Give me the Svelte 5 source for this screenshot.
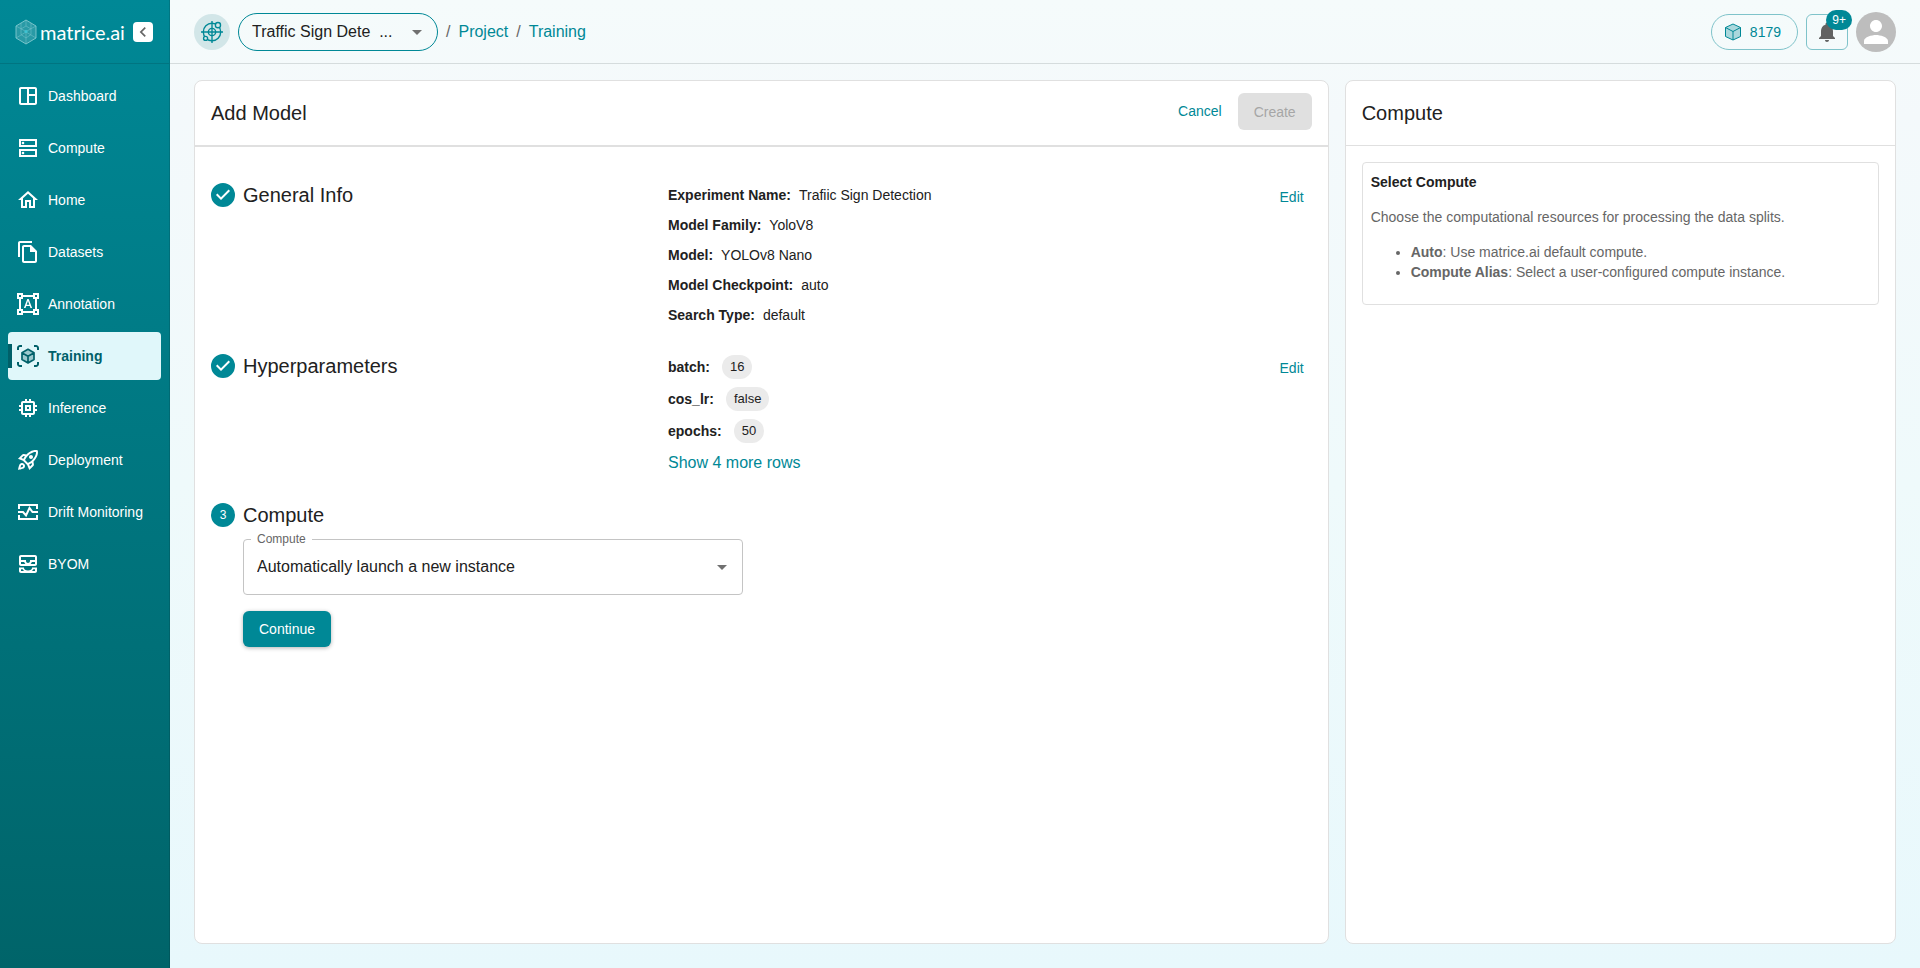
<script lang="ts">
    const navItems = [
        { label: 'Dashboard', icon: 'dashboard' },
        { label: 'Compute', icon: 'compute' },
        { label: 'Home', icon: 'home' },
        { label: 'Datasets', icon: 'datasets' },
        { label: 'Annotation', icon: 'annotation' },
        { label: 'Training', icon: 'training' },
        { label: 'Inference', icon: 'inference' },
        { label: 'Deployment', icon: 'deployment' },
        { label: 'Drift Monitoring', icon: 'drift' },
        { label: 'BYOM', icon: 'byom' },
    ];

    const generalInfo = [
        { label: 'Experiment Name', value: 'Trafiic Sign Detection' },
        { label: 'Model Family', value: 'YoloV8' },
        { label: 'Model', value: 'YOLOv8 Nano' },
        { label: 'Model Checkpoint', value: 'auto' },
        { label: 'Search Type', value: 'default' },
    ];

    const hyperparameters = [
        { label: 'batch', value: '16' },
        { label: 'cos_lr', value: 'false' },
        { label: 'epochs', value: '50' },
    ];

    let active = $state('Training');
    let project = $state('traffic');
    let compute = $state('auto');
</script>

{#snippet navIcon(name: string)}
    <svg class="nav-icon" viewBox="0 0 24 24" fill="currentColor" aria-hidden="true">
        {#if name === 'dashboard'}
            <path d="M19 3H5c-1.100 0-2 .9-2 2v14c0 1.100.9 2 2 2h14c1.100 0 2-.9 2-2V5c0-1.100-.9-2-2-2zM5 19V5h6v14H5zm14 0h-6v-7h6v7zm0-9h-6V5h6v5z" />
        {:else if name === 'compute'}
            <path d="M19 5v4H5V5h14m2-2H3v8h18V3zM19 15v4H5v-4h14m2-2H3v8h18v-8z" />
            <circle cx="7" cy="7" r="1.300" />
            <circle cx="7" cy="17" r="1.300" />
        {:else if name === 'home'}
            <path d="m12 5.690 5 4.500V18h-2v-6H9v6H7v-7.810l5-4.500M12 3 2 12h3v8h6v-6h2v6h6v-8h3L12 3z" />
        {:else if name === 'datasets'}
            <path d="M16 1H4c-1.100 0-2 .9-2 2v14h2V3h12V1zm-1 4H8c-1.100 0-2 .9-2 2v14c0 1.100.9 2 2 2h11c1.100 0 2-.9 2-2V11l-6-6zM8 21V7h6v5h5v9H8z" />
        {:else if name === 'annotation'}
            <path d="M23 7V1h-6v2H7V1H1v6h2v10H1v6h6v-2h10v2h6v-6h-2V7h2zM3 3h2v2H3V3zm2 18H3v-2h2v2zm12-2H7v-2H5V7h2V5h10v2h2v10h-2v2zm4 2h-2v-2h2v2zM19 5V3h2v2h-2zm-5.270 9h-3.490l-.730 2H7.890l3.400-9h1.400l3.410 9h-1.630l-.740-2zm-3.040-1.260h2.610L12 8.910l-1.310 3.830z" />
        {:else if name === 'training'}
            <path d="M3 4c0-.550.450-1 1-1h2V1H4C2.340 1 1 2.340 1 4v2h2V4zM3 20v-2H1v2c0 1.660 1.340 3 3 3h2v-2H4c-.550 0-1-.450-1-1zM20 1h-2v2h2c.550 0 1 .450 1 1v2h2V4c0-1.660-1.340-3-3-3zM21 20c0 .550-.450 1-1 1h-2v2h2c1.660 0 3-1.340 3-3v-2h-2v2z" />
            <path d="m12 5.500 6 3.300v6.600L12 19l-6-3.600V8.800z" opacity="0.3" />
            <path d="M12 5.300 18 8.700v6.800l-6 3.400-6-3.400V8.700zM6.200 8.900 12 12.200l5.800-3.300M12 12.200v6.600" fill="none" stroke="currentColor" stroke-width="1.700" stroke-linejoin="round" />
        {:else if name === 'inference'}
            <path d="M15 9H9v6h6V9zm-2 4h-2v-2h2v2zm8-2V9h-2V7c0-1.100-.9-2-2-2h-2V3h-2v2h-2V3H9v2H7c-1.100 0-2 .9-2 2v2H3v2h2v2H3v2h2v2c0 1.100.9 2 2 2h2v2h2v-2h2v2h2v-2h2c1.100 0 2-.9 2-2v-2h2v-2h-2v-2h2zm-4 6H7V7h10v10z" />
        {:else if name === 'deployment'}
            <path d="M6 15c-.830 0-1.580.340-2.120.880C2.700 17.060 2 22 2 22s4.940-.7 6.120-1.880C8.660 19.580 9 18.830 9 18c0-1.660-1.340-3-3-3zm.710 3.710c-.280.280-2.170.760-2.170.760s.470-1.880.760-2.170c.170-.190.420-.3.700-.3.550 0 1 .450 1 1 0 .280-.110.530-.290.710zm10.710-5.060c6.360-6.360 4.240-11.310 4.240-11.310S16.710.220 10.350 6.580l-2.490-.5c-.650-.130-1.330.080-1.810.550L2 10.690l5 2.140L11.170 17l2.140 5 4.050-4.050c.470-.470.680-1.150.550-1.810l-.490-2.490zM7.410 10.830l-1.910-.820 1.970-1.970 1.440.290c-.570.830-1.080 1.700-1.500 2.500zm6.580 7.670-.820-1.910c.8-.420 1.670-.930 2.490-1.500l.290 1.440-1.960 1.970zM16 12.240c-1.320 1.320-3.380 2.400-4.040 2.730l-2.930-2.930c.320-.650 1.400-2.710 2.730-4.040 4.680-4.680 8.230-3.990 8.230-3.990s.690 3.550-3.990 8.230zM15 11c1.100 0 2-.9 2-2s-.9-2-2-2-2 .9-2 2 .9 2 2 2z" />
        {:else if name === 'drift'}
            <path d="M3 9V5h18v4M3 15v4h18v-4M2 12h5l3 3.500 3.500-7.500 3 4H22" fill="none" stroke="currentColor" stroke-width="2" />
        {:else}
            <path d="M19 3H5c-1.100 0-2 .9-2 2v7c0 1.100.9 2 2 2h14c1.100 0 2-.9 2-2V5c0-1.100-.9-2-2-2zM5 12v-2h3.130c.210.780.670 1.470 1.270 2H5zm14 0h-4.400c.6-.530 1.060-1.220 1.270-2H19v2zm0-4h-5v1c0 1.070-.930 2-2 2s-2-.930-2-2V8H5V5h14v3zM16 15.500V16c0 1.200-1.600 2.500-4 2.500S8 17.200 8 16v-.5H3V19c0 1.100.9 2 2 2h14c1.100 0 2-.9 2-2v-3.500h-5zM5 19v-1.700h1.700c.3.700.8 1.300 1.400 1.700H5zm14 0h-3.100c.6-.4 1.100-1 1.400-1.700H19V19z" />
        {/if}
    </svg>
{/snippet}

{#snippet stepCheck()}
    <svg class="step-icon" viewBox="0 0 24 24" aria-hidden="true">
        <path d="M12 0a12 12 0 1 0 0 24 12 12 0 0 0 0-24zm-2 17l-5-5 1.400-1.400 3.600 3.600 7.600-7.600L19 8l-9 9z" fill="#008896" />
    </svg>
{/snippet}

<div class="app">
    <aside class="sidebar">
        <div class="brand">
            <a class="logo" href="#home" aria-label="matrice.ai">
                <svg class="logo-mark" viewBox="0 0 22 26" aria-hidden="true">
                    <path d="M11 1 21 7v12l-10 6L1 19V7z" fill="#ffffff" fill-opacity="0.16" stroke="#8fd0d6" stroke-width="0.8" />
                    <path d="M1 7l10 5.500L21 7M11 12.500V25M11 1v6M1 19l10-6 10 6M6 4v11.500l5 3.500 5-3.500V4M6 10l5-3 5 3" fill="none" stroke="#7cc7cf" stroke-width="0.5" />
                    <circle cx="11" cy="12.500" r="1.600" fill="#3fc3d2" />
                </svg>
                <span class="logo-text">matrice.ai</span>
            </a>
            <button class="collapse" aria-label="Collapse sidebar">
                <svg viewBox="0 0 24 24" aria-hidden="true">
                    <path d="M15.410 7.410 14 6l-6 6 6 6 1.410-1.410L10.830 12z" fill="#666" />
                </svg>
            </button>
        </div>
        <nav>
            {#each navItems as item}
                <a
                    class="nav-item"
                    class:active={active === item.label}
                    href="#{item.icon}"
                    onclick={() => (active = item.label)}
                >
                    {@render navIcon(item.icon)}
                    <span>{item.label}</span>
                </a>
            {/each}
        </nav>
    </aside>

    <div class="page">
        <header class="topbar">
            <div class="crumbs">
                <span class="project-icon">
                    <svg viewBox="0 0 24 24" fill="none" stroke="#008896" stroke-width="1.500" aria-hidden="true">
                        <circle cx="12" cy="12" r="9.500" />
                        <circle cx="12" cy="12" r="4" />
                        <path d="M12 0v24M0 12h24" />
                        <circle cx="18.500" cy="4.500" r="2.800" fill="#d2e6e8" />
                        <circle cx="5" cy="19" r="2.200" fill="#d2e6e8" />
                    </svg>
                </span>
                <div class="select-wrap project">
                    <select bind:value={project} aria-label="Project">
                        <option value="traffic">Traffic Sign Dete &nbsp;...</option>
                    </select>
                    <svg class="arrow" viewBox="0 0 24 24" aria-hidden="true"><path d="m7 10 5 5 5-5z" /></svg>
                </div>
                <span class="slash">/</span>
                <a href="#project">Project</a>
                <span class="slash">/</span>
                <a href="#training">Training</a>
            </div>
            <div class="account">
                <button class="credits">
                    <svg viewBox="0 0 18 18" aria-hidden="true">
                        <path d="M9 1l7.500 3.500v9L9 17l-7.500-3.500v-9z" fill="#008896" fill-opacity="0.3" stroke="#008896" stroke-linejoin="round" />
                        <path d="M1.500 4.500 9 8.500l7.500-4M9 8.500V17" fill="none" stroke="#008896" />
                    </svg>
                    8179
                </button>
                <button class="bell" aria-label="Notifications">
                    <svg viewBox="0 0 24 24" aria-hidden="true">
                        <path d="M12 22c1.100 0 2-.9 2-2h-4c0 1.100.890 2 2 2zm6-6v-5c0-3.070-1.640-5.640-4.500-6.320V4c0-.830-.670-1.500-1.500-1.500s-1.500.670-1.500 1.500v.680C7.630 5.360 6 7.920 6 11v5l-2 2v1h16v-1l-2-2z" fill="#626262" />
                    </svg>
                    <span class="badge">9+</span>
                </button>
                <button class="avatar" aria-label="Account">
                    <svg viewBox="0 0 24 24" aria-hidden="true">
                        <path d="M12 12c2.210 0 4-1.790 4-4s-1.790-4-4-4-4 1.790-4 4 1.790 4 4 4zm0 2c-2.670 0-8 1.340-8 4v2h16v-2c0-2.660-5.330-4-8-4z" fill="#fff" />
                    </svg>
                </button>
            </div>
        </header>

        <main class="content">
            <section class="panel">
                <div class="panel-head form-head">
                    <h1>Add Model</h1>
                    <div class="actions">
                        <button class="text-btn">Cancel</button>
                        <button class="create-btn" disabled>Create</button>
                    </div>
                </div>
                <div class="steps">
                    <div class="step">
                        <div class="step-title">
                            {@render stepCheck()}
                            <h2>General Info</h2>
                        </div>
                        <dl class="details">
                            {#each generalInfo as row}
                                <div class="detail">
                                    <dt>{row.label}:</dt>
                                    <dd>{row.value}</dd>
                                </div>
                            {/each}
                        </dl>
                        <button class="text-btn">Edit</button>
                    </div>

                    <div class="step">
                        <div class="step-title">
                            {@render stepCheck()}
                            <h2>Hyperparameters</h2>
                        </div>
                        <div class="params">
                            <dl class="details">
                                {#each hyperparameters as row}
                                    <div class="detail">
                                        <dt>{row.label}:</dt>
                                        <dd class="chip">{row.value}</dd>
                                    </div>
                                {/each}
                            </dl>
                            <button class="more">Show 4 more rows</button>
                        </div>
                        <button class="text-btn">Edit</button>
                    </div>

                    <div class="compute-step">
                        <div class="step-title">
                            <span class="step-icon step-number">3</span>
                            <h2>Compute</h2>
                        </div>
                        <div class="step-form">
                            <div class="select-wrap field">
                                <label for="compute">Compute</label>
                                <select id="compute" bind:value={compute}>
                                    <option value="auto">Automatically launch a new instance</option>
                                </select>
                                <svg class="arrow" viewBox="0 0 24 24" aria-hidden="true"><path d="m7 10 5 5 5-5z" /></svg>
                            </div>
                            <button class="continue">Continue</button>
                        </div>
                    </div>
                </div>
            </section>

            <aside class="panel help">
                <div class="panel-head">
                    <h2>Compute</h2>
                </div>
                <div class="help-card">
                    <h3>Select Compute</h3>
                    <p>Choose the computational resources for processing the data splits.</p>
                    <ul>
                        <li><strong>Auto</strong>: Use matrice.ai default compute.</li>
                        <li><strong>Compute Alias</strong>: Select a user-configured compute instance.</li>
                    </ul>
                </div>
            </aside>
        </main>
    </div>
</div>

<style>
    :global(body) {
        margin: 0;
    }

    .app {
        --teal: #008896;
        --line: #e0e0e0;
        --text: #212121;
        --muted: #666666;
        display: flex;
        min-height: 100vh;
        font-family: 'Liberation Sans', Arial, sans-serif;
        font-size: 14px;
        line-height: 20px;
        color: var(--text);
        background: linear-gradient(180deg, #f5fbfb 0%, #f4f9fb 12%, #effafb 50%, #e8f8fc 100%);
    }

    .app * {
        box-sizing: border-box;
    }

    button,
    select {
        font: inherit;
        color: inherit;
        cursor: pointer;
    }

    button {
        padding: 0;
        border: none;
        background: none;
    }

    a {
        color: var(--teal);
        text-decoration: none;
    }

    h1,
    h2,
    h3,
    p,
    dl,
    dd {
        margin: 0;
    }

    h1,
    h2 {
        font-size: 20px;
        line-height: 32px;
        font-weight: 400;
    }

    .sidebar {
        flex: none;
        width: 170px;
        border-right: 1px solid rgba(0, 0, 0, 0.12);
        color: #fff;
        background: linear-gradient(180deg, #008896 0%, #006469 100%);
    }

    .brand {
        display: flex;
        align-items: center;
        justify-content: space-between;
        height: 64px;
        padding: 1px 16px 0 15px;
        border-bottom: 1px solid rgba(0, 0, 0, 0.12);
    }

    .logo {
        display: flex;
        align-items: center;
        gap: 3px;
        color: #fff;
    }

    .logo-mark {
        width: 22px;
        height: 26px;
    }

    .logo-text {
        font-family: Lato, sans-serif;
        font-size: 20px;
        line-height: 24px;
    }

    .collapse {
        display: flex;
        width: 20px;
        height: 20px;
        border-radius: 4px;
        background: #fff;
    }

    nav {
        display: flex;
        flex-direction: column;
        gap: 4px;
        padding: 8px;
    }

    .nav-item {
        display: flex;
        align-items: center;
        gap: 8px;
        height: 48px;
        padding-left: 8px;
        border-radius: 4px;
        color: #fff;
    }

    .nav-icon {
        width: 24px;
        height: 24px;
    }

    .nav-item.active {
        color: #006069;
        font-weight: 700;
        background: linear-gradient(#006069, #006069) left center / 4px 24px no-repeat, #e0f7fa;
    }

    .page {
        flex: 1;
        min-width: 0;
        display: flex;
        flex-direction: column;
    }

    .topbar {
        display: flex;
        align-items: center;
        justify-content: space-between;
        height: 64px;
        padding: 1px 24px 0;
        border-bottom: 1px solid #d5dcdd;
    }

    .crumbs {
        display: flex;
        align-items: center;
        gap: 8px;
        font-size: 16px;
        line-height: 24px;
    }

    .project-icon {
        display: flex;
        align-items: center;
        justify-content: center;
        width: 36px;
        height: 36px;
        border-radius: 50%;
        background: #d2e6e8;
    }

    .project-icon svg {
        width: 22px;
        height: 22px;
    }

    .slash {
        color: var(--muted);
    }

    .select-wrap {
        position: relative;
    }

    .select-wrap select {
        width: 100%;
        appearance: none;
        background: transparent;
        outline: none;
    }

    .arrow {
        position: absolute;
        top: 50%;
        right: 9px;
        width: 24px;
        height: 24px;
        margin-top: -12px;
        fill: #707070;
        pointer-events: none;
    }

    .project {
        width: 200px;
    }

    .project select {
        height: 38px;
        padding: 0 32px 0 13px;
        border: 1px solid var(--teal);
        border-radius: 20px;
    }

    .account {
        display: flex;
        align-items: center;
        gap: 8px;
    }

    .credits {
        display: flex;
        align-items: center;
        gap: 8px;
        height: 36px;
        padding: 0 16px 0 12px;
        border: 1px solid #7fc3ca;
        border-radius: 18px;
        color: var(--teal);
    }

    .credits svg {
        width: 18px;
        height: 18px;
    }

    .bell {
        position: relative;
        display: flex;
        align-items: center;
        justify-content: center;
        width: 42px;
        height: 36px;
        border: 1px solid #7fc3ca;
        border-radius: 6px;
    }

    .bell svg {
        width: 24px;
        height: 24px;
    }

    .badge {
        position: absolute;
        top: -5px;
        right: -5px;
        padding: 0 6px;
        border-radius: 10px;
        color: #fff;
        font-size: 12px;
        background: var(--teal);
    }

    .avatar {
        display: flex;
        align-items: center;
        justify-content: center;
        width: 40px;
        height: 40px;
        border-radius: 50%;
        background: #bdbdbd;
    }

    .avatar svg {
        flex: none;
        width: 36px;
        height: 36px;
    }

    .content {
        flex: 1;
        display: grid;
        grid-template-columns: 2fr 1fr;
        padding: 16px 24px 24px;
    }

    .panel {
        border: 1px solid var(--line);
        border-radius: 8px;
        background: #fff;
    }

    .help {
        margin-left: 16px;
    }

    .panel-head {
        display: flex;
        justify-content: space-between;
        padding: 16px;
        border-bottom: 1px solid var(--line);
    }

    .form-head {
        padding: 12px 16px 15px;
        border-bottom-width: 2px;
    }

    .form-head h1 {
        margin-top: 4px;
    }

    .actions {
        display: flex;
        gap: 8px;
    }

    .text-btn {
        height: 36px;
        padding: 0 8px;
        color: var(--teal);
    }

    .create-btn {
        height: 37px;
        padding: 0 16px;
        border-radius: 6px;
        color: #a6a6a6;
        background: #e0e0e0;
        cursor: default;
    }

    .steps {
        display: flex;
        flex-direction: column;
        gap: 24px;
        padding: 32px 16px;
    }

    .step {
        display: grid;
        grid-template-columns: 457px 1fr auto;
        align-items: start;
    }

    .step-title {
        display: flex;
        align-items: center;
        gap: 8px;
    }

    .step-icon {
        width: 24px;
        height: 24px;
    }

    .step-number {
        border-radius: 50%;
        color: #fff;
        font-size: 12px;
        line-height: 24px;
        text-align: center;
        background: var(--teal);
    }

    .detail {
        display: flex;
        gap: 8px;
    }

    dt {
        font-weight: 700;
    }

    .chip {
        padding: 0 8px;
        border-radius: 12px;
        font-size: 13px;
        background: #ebebeb;
    }

    .more {
        color: var(--teal);
        font-size: 16px;
        line-height: 24px;
    }

    .details {
        display: flex;
        flex-direction: column;
        gap: 10px;
        padding: 6px 0 1px;
    }

    .params .details {
        gap: 8px;
        padding: 5px 0 8px;
    }

    .params .detail {
        gap: 12px;
        line-height: 24px;
    }

    .step-form {
        display: flex;
        flex-direction: column;
        align-items: flex-start;
        gap: 16px;
        padding: 8px 32px;
    }

    .field {
        width: 500px;
        max-width: 100%;
    }

    .field label {
        position: absolute;
        top: -10px;
        left: 8px;
        padding: 0 6px;
        color: var(--muted);
        font-size: 12px;
        background: #fff;
    }

    .field select {
        height: 56px;
        padding: 0 40px 0 13px;
        border: 1px solid #c4c4c4;
        border-radius: 4px;
        font-size: 16px;
    }

    .continue {
        height: 36px;
        padding: 0 16px;
        border-radius: 6px;
        color: #fff;
        background: var(--teal);
        box-shadow: 0 1px 4px rgba(0, 0, 0, 0.3);
    }

    .help-card {
        margin: 16px;
        padding: 9px 8px;
        border: 1px solid var(--line);
        border-radius: 4px;
        color: var(--muted);
    }

    .help-card h3 {
        color: var(--text);
        font-size: 14px;
        line-height: 20px;
    }

    .help-card p {
        margin: 15px 0;
    }

    .help-card ul {
        margin: 0 0 13px;
        padding-left: 40px;
    }
</style>
